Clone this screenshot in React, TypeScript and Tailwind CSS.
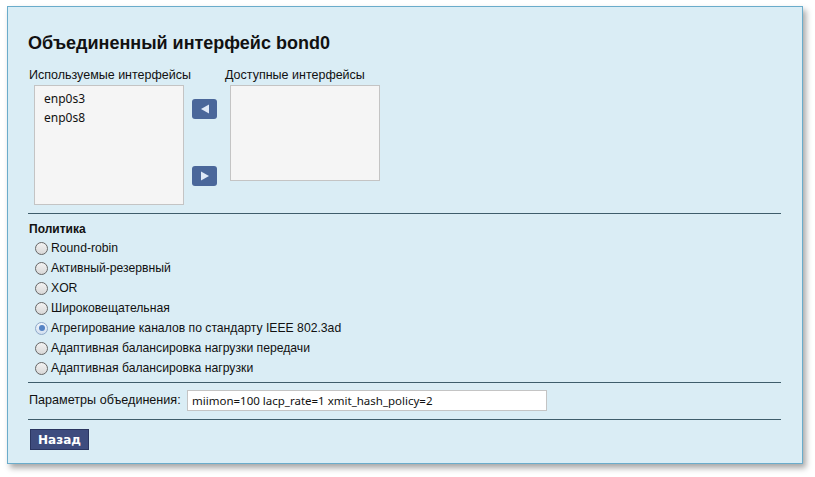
import { useState } from 'react'

const policies = [
  'Round-robin',
  'Активный-резервный',
  'XOR',
  'Широковещательная',
  'Агрегирование каналов по стандарту IEEE 802.3ad',
  'Адаптивная балансировка нагрузки передачи',
  'Адаптивная балансировка нагрузки',
]

function Radio({ checked }: { checked: boolean }) {
  return (
    <span
      className={
        'flex items-center justify-center w-[13px] h-[13px] rounded-full border-[1.5px] ' +
        (checked
          ? 'border-[#8ea8c8] bg-[linear-gradient(#f0f5fb,#d3e0f0)]'
          : 'border-[#666] bg-[linear-gradient(#f2f2f2,#d8d8d8)]')
      }
    >
      {checked && <span className="w-[6px] h-[6px] rounded-full bg-[#5483c4]" />}
    </span>
  )
}

function ArrowButton({ dir }: { dir: 'left' | 'right' }) {
  return (
    <button className="flex items-center justify-center w-[25px] h-[20px] rounded-[3px] bg-[#4a679a]">
      <svg width="10" height="10" viewBox="0 0 10 10">
        {dir === 'left' ? (
          <polygon points="9,0.5 9,9.5 1,5" fill="#dfe9f7" />
        ) : (
          <polygon points="1,0.5 1,9.5 9,5" fill="#dfe9f7" />
        )}
      </svg>
    </button>
  )
}

export default function App() {
  const [policy, setPolicy] = useState(4)

  return (
    <div className="min-h-screen bg-white pt-[6px] pl-[7px] font-['Liberation_Sans',Arial,sans-serif] text-[#111]">
      <div className="w-[796px] h-[458px] border border-[#6aaccb] bg-[#daedf5] shadow-[3px_4px_6px_rgba(0,0,0,0.35)] pt-[24px] pl-[20px] pr-[21px]">
        <h1 className="text-[18px] leading-[24px] font-bold">Объединенный интерфейс bond0</h1>

        <div className="flex mt-[12px]">
          <div className="w-[164px] shrink-0">
            <div className="text-[12.5px] leading-[16px] pl-px whitespace-nowrap">Используемые интерфейсы</div>
            <div className="mt-[2px] ml-[6px] w-[150px] h-[120px] bg-[#f5f5f5] border border-[#c4c4c4] pt-[3px] pl-[9px] font-['Noto_Sans',sans-serif] text-[12px] leading-[19px]">
              <div>enp0s3</div>
              <div>enp0s8</div>
            </div>
          </div>
          <div className="w-[25px] shrink-0 pt-[32px] flex flex-col gap-[47px]">
            <ArrowButton dir="left" />
            <ArrowButton dir="right" />
          </div>
          <div className="ml-[8px]">
            <div className="text-[12.5px] leading-[16px] whitespace-nowrap">Доступные интерфейсы</div>
            <div className="mt-[2px] ml-[5px] w-[150px] h-[96px] bg-[#f5f5f5] border border-[#c4c4c4]" />
          </div>
        </div>

        <div className="mt-[8px] border-t border-[#3f5d6b]" />

        <div className="mt-[7px] pl-px text-[12px] leading-[16px] font-bold">Политика</div>
        <div className="mt-px">
          {policies.map((p, i) => (
            <label key={p} className="flex items-center h-[20px] pl-[7px] gap-[3px] text-[12.2px] cursor-pointer" onClick={() => setPolicy(i)}>
              <Radio checked={policy === i} />
              <span>{p}</span>
            </label>
          ))}
        </div>

        <div className="mt-[4px] border-t border-[#3f5d6b]" />

        <div className="flex items-center mt-[7px] h-[21px] pl-px">
          <span className="text-[12.6px] w-[158px]">Параметры объединения:</span>
          <input
            className="w-[360px] h-[21px] bg-white border border-[#c4c4c4] px-[4px] font-['Noto_Sans',sans-serif] text-[11.5px] text-[#111] outline-none"
            defaultValue="miimon=100 lacp_rate=1 xmit_hash_policy=2"
          />
        </div>

        <div className="mt-[8px] border-t border-[#3f5d6b]" />

        <button className="mt-[9px] ml-[2px] w-[59px] h-[21px] bg-[#3e4c7e] border border-[#2a3560] text-white font-['DejaVu_Sans',sans-serif] font-bold text-[12px]">
          Назад
        </button>
      </div>
    </div>
  )
}
